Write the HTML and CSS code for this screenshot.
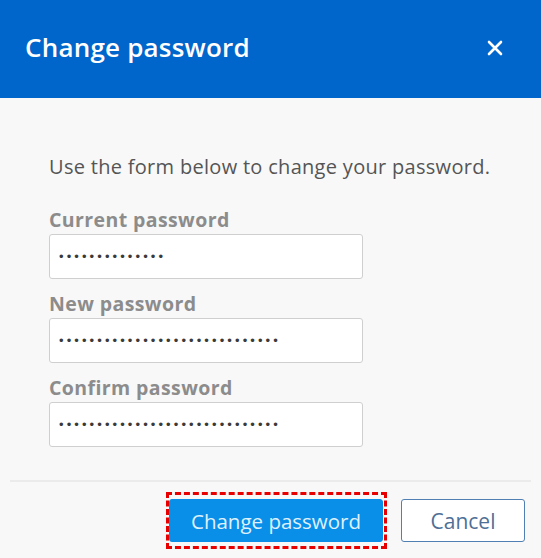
FILE: index.html
```html
<!DOCTYPE html>
<html lang="en">
<head>
<meta charset="utf-8">
<title>Change password</title>
<link rel="stylesheet" href="styles.css">
</head>
<body>
<div class="dialog">
  <header class="dialog-header">
    <h1 class="dialog-title">Change password</h1>
    <button class="close-btn" aria-label="Close">
      <svg width="16" height="16" viewBox="0 0 16 16"><path d="M2 2 L14 14 M14 2 L2 14" stroke="#fff" stroke-width="2.6" stroke-linecap="round"/></svg>
    </button>
  </header>
  <main class="dialog-body">
    <p class="intro">Use the form below to change your password.</p>
    <div class="field">
      <label class="field-label" for="cur">Current password</label>
      <input class="field-input" id="cur" type="password" value="abcdefghijklmn">
    </div>
    <div class="field">
      <label class="field-label" for="new">New password</label>
      <input class="field-input" id="new" type="password" value="abcdefghijklmnopqrstuvwxyzabc">
    </div>
    <div class="field">
      <label class="field-label" for="conf">Confirm password</label>
      <input class="field-input" id="conf" type="password" value="abcdefghijklmnopqrstuvwxyzabc">
    </div>
  </main>
  <footer class="dialog-footer">
    <div class="focus-ring">
      <button class="btn btn-primary">Change password</button>
    </div>
    <button class="btn btn-secondary">Cancel</button>
  </footer>
</div>
</body>
</html>
```
FILE: styles.css
```css
* { box-sizing: border-box; }
html, body { margin: 0; padding: 0; }
body {
  background: #f8f8f8;
  font-family: "Open Sans", "Noto Sans", "Liberation Sans", sans-serif;
  width: 541px;
  height: 558px;
  overflow: hidden;
}
.dialog { display: flex; flex-direction: column; }
.dialog-header {
  height: 98px;
  background: #0066cc;
  display: flex;
  align-items: center;
  justify-content: space-between;
  padding: 0 38px 4px 25px;
}
.dialog-title {
  margin: 0;
  color: #fff;
  font-size: 26px;
  font-weight: 600;
  letter-spacing: 0.2px;
}
.close-btn {
  background: none;
  border: 0;
  padding: 0;
  width: 16px;
  height: 16px;
  display: flex;
  margin-top: 2px;
}
.dialog-body {
  padding: 56px 49px 0 49px;
}
.intro {
  margin: 0 0 28px 0;
  font-size: 20px;
  line-height: 26px;
  letter-spacing: 0.3px;
  color: #555;
}
.field { display: flex; flex-direction: column; margin-bottom: 13px; }
.field:last-child { margin-bottom: 0; }
.field-label {
  font-size: 19.5px;
  line-height: 24px;
  font-weight: 700;
  letter-spacing: 0.4px;
  color: #8c8c8c;
  margin-bottom: 2px;
}
.field-input {
  width: 314px;
  height: 45px;
  border: 1px solid #cfcfcf;
  border-radius: 3px;
  background: #fff;
  padding: 0 9px;
  font-size: 13px;
  color: #3a3a3a;
  letter-spacing: 3.1px;
  outline: none;
}
.dialog-footer {
  margin: 33px 10px 0 10px;
  border-top: 2px solid #ebebeb;
  display: flex;
  justify-content: flex-end;
  align-items: center;
  gap: 14px;
  padding: 10px 6px 0 0;
}
.focus-ring {
  border: 3px dashed #e80000;
  padding: 4px 1px 4px 0;
  display: flex;
}
.btn {
  height: 43px;
  border-radius: 3px;
  font-family: inherit;
  padding: 0;
}
.btn-primary {
  width: 214px;
  background: #0a8fe8;
  border: 1px solid #0a8fe8;
  color: #dff1ff;
  font-size: 20.5px;
}
.btn-secondary {
  width: 124px;
  background: #fff;
  border: 1px solid #4f7fb3;
  color: #4e6f96;
  font-size: 21px;
}
```
